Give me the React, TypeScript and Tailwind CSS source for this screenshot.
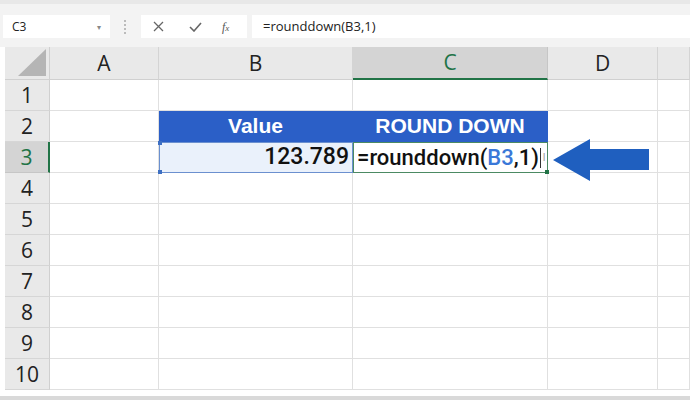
import React from 'react';

const cols = [
  { key: 'A', w: 'w-[109px]' },
  { key: 'B', w: 'w-[194px]' },
  { key: 'C', w: 'w-[195px]' },
  { key: 'D', w: 'w-[110px]' },
  { key: '', w: 'flex-1' },
];

const rows = [1, 2, 3, 4, 5, 6, 7, 8, 9, 10];

const ui = { fontFamily: '"Open Sans", "Noto Sans", sans-serif' };
const cellFont = { fontFamily: '"Liberation Sans", Arial, sans-serif' };
const valueFont = { fontFamily: 'Roboto, "Liberation Sans", sans-serif' };

const Toolbar: React.FC = () => (
  <div className="h-[47px] bg-[#f3f3f3] border-t-[4px] border-[#e8e8e8] flex items-center pt-[2px]" style={ui}>
    <div className="ml-[3px] w-[107px] h-[23px] bg-white flex items-center justify-between px-[9px] text-[12px] text-[#222]">
      <span>C3</span>
      <span className="text-[8px] text-[#888] leading-none">▾</span>
    </div>
    <div className="ml-[14px] flex flex-col gap-[2px]">
      <span className="w-[2px] h-[2px] bg-[#bbb]" />
      <span className="w-[2px] h-[2px] bg-[#bbb]" />
      <span className="w-[2px] h-[2px] bg-[#bbb]" />
      <span className="w-[2px] h-[2px] bg-[#bbb]" />
    </div>
    <div className="ml-[15px] w-[106px] h-[23px] bg-white flex items-center text-[#666]">
      <svg className="ml-[12px]" width="11" height="11" viewBox="0 0 11 11">
        <path d="M1 1 L10 10 M10 1 L1 10" stroke="#666" strokeWidth="1.3" fill="none" />
      </svg>
      <svg className="ml-[25px]" width="13" height="10" viewBox="0 0 13 10">
        <path d="M1 5 L5 9 L12 1" stroke="#666" strokeWidth="1.6" fill="none" />
      </svg>
      <span className="ml-[20px] text-[12px] italic text-[#555]" style={{ fontFamily: '"Liberation Serif", serif' }}>
        f<span className="text-[9px]">x</span>
      </span>
    </div>
    <div className="ml-[5px] flex-1 h-[23px] bg-white flex items-center pl-[11px] text-[13px] text-[#222]">
      =rounddown(B3,1)
    </div>
  </div>
);

const HeaderRow: React.FC = () => (
  <div className="flex h-[33px] pl-[5px]" style={ui}>
    <div className="w-[45px] bg-[#e9e9e9] border-r border-b border-[#d0d0d0] relative overflow-hidden">
      <svg className="absolute right-[3px] bottom-[3px]" width="28" height="27" viewBox="0 0 28 27">
        <polygon points="28,0 28,27 0,27" fill="#b5b5b5" />
      </svg>
    </div>
    {cols.map((c, i) => {
      const sel = c.key === 'C';
      return (
        <div
          key={i}
          className={`${c.w} flex items-center justify-center text-[21px] leading-none border-r ${
            sel
              ? 'bg-[#d4d4d4] text-[#217346] border-[#c6c6c6] border-b-2 border-b-[#217346]'
              : 'bg-[#e9e9e9] text-[#222] border-[#d4d4d4] border-b border-b-[#d0d0d0]'
          }`}
        >
          {c.key}
        </div>
      );
    })}
  </div>
);

const Cell: React.FC<{ row: number; col: string; w: string }> = ({ row, col, w }) => {
  if (row === 2 && (col === 'B' || col === 'C')) {
    return (
      <div
        className={`${w} bg-[#2b5fc7] text-white font-bold text-[21px] flex items-center justify-center border-r border-b border-[#2b5fc7]`}
        style={cellFont}
      >
        {col === 'B' ? 'Value' : 'ROUND DOWN'}
      </div>
    );
  }
  if (row === 3 && col === 'B') {
    return (
      <div className={`${w} relative bg-[#eaf1fb] border border-[#6b90cf] flex items-center justify-end pr-[3px] text-[23px] font-medium text-[#111]`} style={valueFont}>
        123.789
        <span className="absolute -left-[2px] -top-[2px] w-[4px] h-[4px] bg-[#3d6fc2]" />
        <span className="absolute -left-[2px] -bottom-[2px] w-[4px] h-[4px] bg-[#3d6fc2]" />
      </div>
    );
  }
  if (row === 3 && col === 'C') {
    return (
      <div className={`${w} relative bg-white border border-[#4c8a63] flex items-center pl-[3px] text-[22px] text-[#111] font-medium`} style={valueFont}>
        <span>
          =rounddown(<span className="text-[#3a78d8]">B3</span>,1)
        </span>
        <span className="ml-[1px] w-[1px] h-[20px] bg-[#333]" />
        <span className="ml-[2px] text-[10px] text-[#999] font-normal leading-none">I</span>
        <span className="absolute -right-[2px] -bottom-[2px] w-[4px] h-[4px] bg-[#217346]" />
      </div>
    );
  }
  return <div className={`${w} border-r border-b border-[#e0e0e0]`} />;
};

const App: React.FC = () => (
  <div className="w-[690px] h-[400px] bg-white overflow-hidden relative">
    <Toolbar />
    <HeaderRow />
    {rows.map((r) => {
      const sel = r === 3;
      return (
        <div key={r} className="flex h-[31px] pl-[5px]">
          <div
            className={`w-[45px] flex items-center justify-center text-[21px] leading-none border-b ${
              sel
                ? 'bg-[#d4d4d4] text-[#217346] border-b-[#c6c6c6] border-r-2 border-r-[#217346]'
                : 'bg-[#e9e9e9] text-[#222] border-b-[#d6d6d6] border-r border-r-[#d0d0d0]'
            }`}
            style={ui}
          >
            {r}
          </div>
          {cols.map((c, i) => (
            <Cell key={i} row={r} col={c.key} w={c.w} />
          ))}
        </div>
      );
    })}
    <div className="absolute left-0 right-0 bottom-0 h-[4px] bg-[#d9d9d9]" />
    <svg className="absolute left-[553px] top-[139px]" width="96" height="42" viewBox="0 0 96 42">
      <polygon points="0,21 37,0 37,10 96,10 96,31 37,31 37,42" fill="#1f5fbf" />
    </svg>
  </div>
);

export default App;
